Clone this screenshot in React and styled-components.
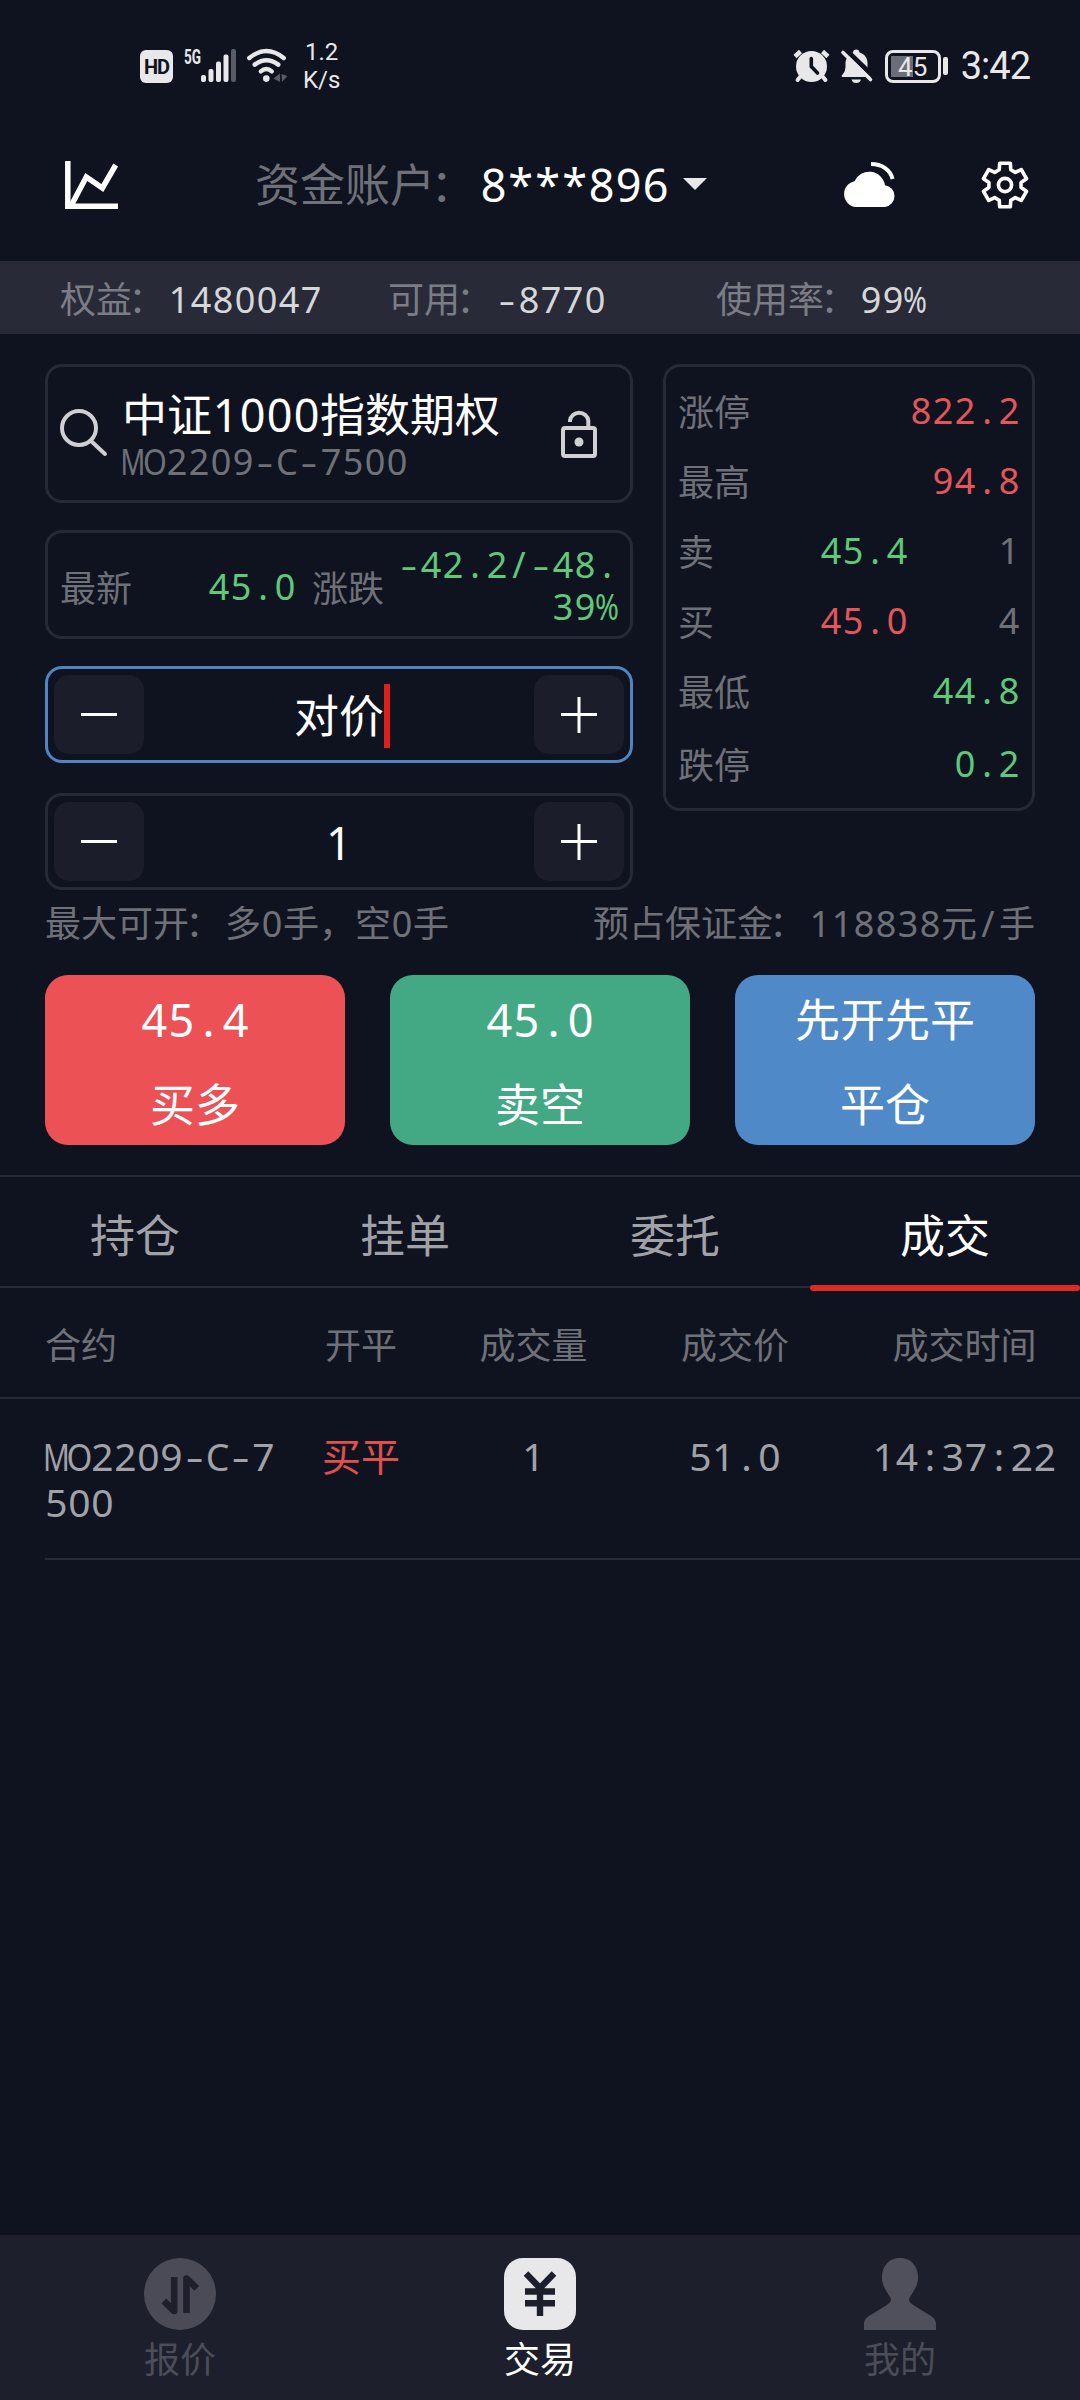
import React from 'react';
import styled, { createGlobalStyle } from 'styled-components'

const colors = {
    bg: '#0f1320',
    line: '#262936',
    label: '#6f7179',
    text: '#a0a2a8',
    red: '#e4565a',
    green: '#5fc87b',
}

// horizontal scale of the latin glyphs that don't fit the fixed pitch as they are
const SQUEEZE = { M: 0.76, O: 0.85, C: 0.96, '%': 0.8, '-': 1.45 }

// Latin characters sit in cells of one width, chinese characters flow as usual
const Txt = ({ children, size = 36, color }) => {
    const pitch = Math.round(size * 0.6)
    const parts = String(children).match(/\d+|[\x21-\x7e]|：|[^\x21-\x7e：]+/g)
    return (
        <Label $size={size} $color={color}>
            {parts.map((part, i) => {
                if (/^\d/.test(part)) return <Digits key={i} $gap={pitch - size * 0.572}>{part}</Digits>
                if (/^[\x21-\x7e]/.test(part)) return <Cell key={i} $pitch={pitch} $squeeze={SQUEEZE[part] || 1}>{part}</Cell>
                if (part === '：') return <Colon key={i}>{part}</Colon>
                return part
            })}
        </Label>
    )
}

const quotes = [
    { name: '涨停', value: '822.2', color: colors.red },
    { name: '最高', value: '94.8', color: colors.red },
    { name: '卖', value: '45.4', color: colors.green, count: '1' },
    { name: '买', value: '45.0', color: colors.red, count: '4' },
    { name: '最低', value: '44.8', color: colors.green },
    { name: '跌停', value: '0.2', color: colors.green },
]

const actions = [
    { top: '45.4', name: '买多', bg: '#ec5155' },
    { top: '45.0', name: '卖空', bg: '#43a984' },
    { top: '先开先平', name: '平仓', bg: '#4f89c8' },
]

const tabs = ['持仓', '挂单', '委托', '成交']

const HdIcon = () => <HdBadge>HD</HdBadge>

const SignalIcon = () => (
    <svg width="52" height="34" viewBox="0 0 52 34" fill="#e8e8ea">
        <text x="0" y="14.5" fontFamily="Roboto" fontWeight="700" fontSize="20" textLength="17" lengthAdjust="spacingAndGlyphs">5G</text>
        <rect x="17" y="26" width="5" height="7" rx="2" />
        <rect x="24.5" y="20" width="5" height="13" rx="2" />
        <rect x="32" y="12.5" width="5" height="20.5" rx="2" />
        <rect x="39.5" y="5.5" width="5" height="27.5" rx="2" />
        <rect x="47" y="0" width="5" height="33" rx="2" fill="#595b65" />
    </svg>
)

const WifiIcon = () => (
    <svg width="42" height="34" viewBox="0 0 42 34" fill="none" stroke="#e8e8ea" strokeWidth="4.4" strokeLinecap="round">
        <path d="M2.3 9Q19.5-5 36.7 9" />
        <path d="M7.7 15.6Q19.5 7 31.3 15.6" />
        <path d="M13.8 22.3Q19.3 17.6 24.8 22.3" />
        <circle cx="19.3" cy="29.6" r="3.3" fill="#e8e8ea" stroke="none" />
        <path d="M26.5 29.5L33 24.5V33zM34.5 25L40.5 27L35 33z" fill="#595b65" stroke="none" />
    </svg>
)

const AlarmIcon = () => (
    <svg width="36" height="34" viewBox="0 0 36 34" fill="none" stroke="#e8e8ea" strokeWidth="4" strokeLinecap="round">
        <circle cx="17.5" cy="17.5" r="15.5" fill="#e8e8ea" stroke="none" />
        <path d="M1 7.5L6.500 2.500M28.500 2.500L34 7.5" strokeLinecap="butt" strokeWidth="4.5" />
        <path d="M6 28L3.6 31M29 28L31.4 31" />
        <path d="M17.3 9.5V17.5L23.5 24" stroke={colors.bg} strokeWidth="3.6" />
    </svg>
)

const MutedIcon = () => (
    <svg width="32" height="34" viewBox="0 0 32 34" fill="#e8e8ea">
        <path d="M4.5 13.5C5 9 8 5 12 3.5C12-.5 18.5-.5 18.5 3.5C24 5 26.5 9.5 26.5 14V23L30 28H1.5Q-.5 27 2 25Q4.5 22 4.5 18z" />
        <path d="M10.5 30.5H20Q19 34 15.3 34Q11.5 34 10.5 30.5z" />
        <path d="M4 0L32 27" stroke={colors.bg} strokeWidth="5" />
        <path d="M2 3.5L29.5 30.5" stroke="#e8e8ea" strokeWidth="3.6" strokeLinecap="round" />
    </svg>
)

const ChartIcon = () => (
    <svg width="54" height="48" viewBox="0 0 54 48" fill="none" stroke="#fff" strokeWidth="5.5">
        <path d="M2.8 0V45.2H53" />
        <path d="M6.5 44L21.3 16L37.4 27L50.7 4" />
    </svg>
)

const CloudIcon = () => (
    <svg width="54" height="46" viewBox="0 0 54 46" fill="#fff">
        <path d="M13 45A13 13 0 0 1 11.5 19.3A16 16 0 0 1 42 23.2A11 11 0 0 1 42 45z" />
        <path d="M28 2C39 2 47.5 8 49.5 17" fill="none" stroke="#fff" strokeWidth="4" />
    </svg>
)

// outline of the top tooth, the gear is the same tooth turned six times
const TOOTH = [[-5.8, -15.2], [-5.3, -21.8], [5.3, -21.8], [5.8, -15.2]]

const gearPoints = [0, 1, 2, 3, 4, 5].flatMap(k => {
    const a = (k * Math.PI) / 3
    return TOOTH.map(([x, y]) => [
        (x * Math.cos(a) - y * Math.sin(a)).toFixed(2),
        (x * Math.sin(a) + y * Math.cos(a)).toFixed(2),
    ].join())
}).join(' ')

const GearIcon = () => (
    <svg width="48" height="48" viewBox="-24 -24 48 48" fill="none" stroke="#fff" strokeWidth="3.6" strokeLinejoin="round">
        <polygon points={gearPoints} />
        <circle r="6.6" />
    </svg>
)

const SearchIcon = () => (
    <svg width="50" height="50" viewBox="0 0 50 50" fill="none" stroke="#cfcfd4" strokeWidth="4" strokeLinecap="round">
        <circle cx="20" cy="19" r="17" />
        <path d="M31.5 31.5L46 45" />
    </svg>
)

const LockIcon = () => (
    <svg width="36" height="48" viewBox="0 0 36 48" fill="none" stroke="#cfcfd4" strokeWidth="4">
        <rect x="2" y="18" width="32" height="28" rx="2" />
        <path d="M9 12V10.5A9.2 8.7 0 0 1 27.3 10.5V17" />
        <circle cx="18" cy="32" r="4.5" fill="#cfcfd4" stroke="none" />
    </svg>
)

const MinusIcon = () => (
    <svg width="36" height="36" viewBox="0 0 36 36" stroke="#fff" strokeWidth="3">
        <path d="M0 17.5H36" />
    </svg>
)

const PlusIcon = () => (
    <svg width="36" height="36" viewBox="0 0 36 36" stroke="#fff" strokeWidth="3">
        <path d="M0 17.5H36M18 0V36" />
    </svg>
)

const PriceIcon = () => (
    <svg width="72" height="72" viewBox="0 0 72 72" fill="none" stroke="#1d1f2d" strokeWidth="6.6" strokeLinejoin="round">
        <circle cx="36" cy="36" r="36" fill="#4a4b56" stroke="none" />
        <path d="M30.2 19V53L19.8 43" />
        <path d="M42.5 55V20.5L52.8 30.3" />
    </svg>
)

const TradeIcon = () => (
    <svg width="72" height="72" viewBox="0 0 72 72" fill="none" stroke="#1d1f2d" strokeWidth="6.4">
        <rect width="72" height="72" rx="19" fill="#e8e8ea" stroke="none" />
        <path d="M22 15.5L36 30L50 15.5M36 28V58M21 33.5H51M21 45.2H51" />
    </svg>
)

const MineIcon = () => (
    <svg width="72" height="72" viewBox="0 0 72 72" fill="#4f505b">
        <path d="M0 72V67C0 62 2 60 5 58L22 47.5C27 44.5 28 42 25.5 38C21 31 18 27 18 19C18 8 25 0 36 0C47 0 54 8 54 19C54 27 51 31 46.5 38C44 42 45 44.5 50 47.5L67 58C70 60 72 62 72 67V72z" />
    </svg>
)

const Stepper = ({ value, focused }) => (
    <StepperBox $focused={focused}>
        <StepButton type="button"><MinusIcon /></StepButton>
        <StepValue>
            <Txt size={45} color="#fff">{value}</Txt>
            {focused && <Caret />}
        </StepValue>
        <StepButton type="button"><PlusIcon /></StepButton>
    </StepperBox>
)

const App = () => (
    <>
        <GlobalStyle />
        <Screen>
            <StatusBar>
                <StatusGroup>
                    <HdIcon />
                    <SignalIcon />
                    <WifiIcon />
                    <Speed>1.2<br />K/s</Speed>
                </StatusGroup>
                <StatusGroup>
                    <AlarmIcon />
                    <MutedIcon />
                    <Battery><BatteryBody>45</BatteryBody><BatteryTip /></Battery>
                    <Clock>3:42</Clock>
                </StatusGroup>
            </StatusBar>

            <Header>
                <ChartIcon />
                <Account>
                    <Txt size={45} color={colors.label}>资金账户：</Txt>
                    <Txt size={45} color="#fff">8***896</Txt>
                    <Arrow />
                </Account>
                <HeaderIcons>
                    <CloudIcon />
                    <GearIcon />
                </HeaderIcons>
            </Header>

            <Funds>
                <Fund><Txt color="#7b7d86">权益：</Txt><Txt color="#d6d7da">1480047</Txt></Fund>
                <Fund><Txt color="#7b7d86">可用：</Txt><Txt color="#d6d7da">-8770</Txt></Fund>
                <Fund><Txt color="#7b7d86">使用率：</Txt><Txt color="#d6d7da">99%</Txt></Fund>
            </Funds>

            <Trade>
                <OrderForm>
                    <Contract>
                        <SearchIcon />
                        <ContractName>
                            <Txt size={45} color="#fff">中证1000指数期权</Txt>
                            <Txt color={colors.label}>MO2209-C-7500</Txt>
                        </ContractName>
                        <LockIcon />
                    </Contract>
                    <LastPrice>
                        <Txt color={colors.label}>最新</Txt>
                        <Txt color={colors.green}>45.0</Txt>
                        <Txt color={colors.label}>涨跌</Txt>
                        <Change>
                            <Txt color={colors.green}>-42.2/-48.</Txt>
                            <Txt color={colors.green}>39%</Txt>
                        </Change>
                    </LastPrice>
                    <Stepper value="对价" focused />
                    <Stepper value="1" />
                </OrderForm>
                <Quotes>
                    {quotes.map(({ name, value, color, count }) => (
                        <QuoteRow key={name}>
                            <Txt color={colors.label}>{name}</Txt>
                            <QuoteValue><Txt color={color}>{value}</Txt></QuoteValue>
                            {count && <QuoteCount><Txt color={colors.label}>{count}</Txt></QuoteCount>}
                        </QuoteRow>
                    ))}
                </Quotes>
            </Trade>

            <Limits>
                <Txt color={colors.label}>最大可开：多0手，空0手</Txt>
                <Txt color={colors.label}>预占保证金：118838元/手</Txt>
            </Limits>

            <Actions>
                {actions.map(({ top, name, bg }) => (
                    <ActionButton key={name} type="button" $bg={bg}>
                        <Txt size={45} color="#fff">{top}</Txt>
                        <Txt size={45} color="#fff">{name}</Txt>
                    </ActionButton>
                ))}
            </Actions>

            <Tabs>
                {tabs.map(tab => (
                    <Tab key={tab} $active={tab === '成交'}>
                        <Txt size={45}>{tab}</Txt>
                    </Tab>
                ))}
            </Tabs>

            <TableHead>
                <Txt>合约</Txt>
                <Col><Txt>开平</Txt></Col>
                <Col><Txt>成交量</Txt></Col>
                <Col><Txt>成交价</Txt></Col>
                <Col><Txt>成交时间</Txt></Col>
            </TableHead>
            <TableRow>
                <ContractCell>
                    <Txt size={39}>MO2209-C-7</Txt>
                    <Txt size={39}>500</Txt>
                </ContractCell>
                <Col><Txt size={39} color="#e0504d">买平</Txt></Col>
                <Col><Txt size={39}>1</Txt></Col>
                <Col><Txt size={39}>51.0</Txt></Col>
                <Col><Txt size={39}>14:37:22</Txt></Col>
            </TableRow>

            <NavBar>
                <NavItem><PriceIcon /><Txt>报价</Txt></NavItem>
                <NavItem $active><TradeIcon /><Txt>交易</Txt></NavItem>
                <NavItem><MineIcon /><Txt>我的</Txt></NavItem>
            </NavBar>
        </Screen>
    </>
)

const GlobalStyle = createGlobalStyle`
    * {
        box-sizing: border-box;
    }
    body {
        margin: 0;
        background: ${colors.bg};
        font-family: 'Noto Sans', 'Noto Sans CJK SC', sans-serif;
    }
    button {
        border: none;
        padding: 0;
        font-family: inherit;
    }
    svg {
        display: block;
        flex-shrink: 0;
        overflow: visible;
    }
`

const Label = styled.span`
    font-size: ${p => p.$size}px;
    color: ${p => p.$color || 'inherit'};
    white-space: nowrap;
`
const Digits = styled.span`
    margin: 0 ${p => -p.$gap / 2}px 0 ${p => p.$gap / 2}px;
    letter-spacing: ${p => p.$gap}px;
`
const Cell = styled.span`
    display: inline-flex;
    justify-content: center;
    width: ${p => p.$pitch}px;
    transform: scaleX(${p => p.$squeeze});
`
const Colon = styled.span`
    margin: 0 0.1em 0 -0.1em;
`

const Screen = styled.div`
    display: flex;
    flex-direction: column;
    width: 1080px;
    height: 2400px;
    background: ${colors.bg};
    overflow: hidden;
`
const StatusBar = styled.div`
    display: flex;
    justify-content: space-between;
    align-items: center;
    height: 132px;
    padding: 0 50px 0 140px;
    color: #e8e8ea;
    font-family: Roboto, sans-serif;
`
const StatusGroup = styled.div`
    display: flex;
    align-items: center;
    gap: 11px;
`
const HdBadge = styled.div`
    width: 33px;
    height: 33px;
    border-radius: 6px;
    background: #e8e8ea;
    color: ${colors.bg};
    font-size: 20px;
    font-weight: 700;
    line-height: 34px;
    letter-spacing: -1px;
    text-align: center;
`
const Speed = styled.div`
    margin-left: 3px;
    font-size: 24px;
    line-height: 28px;
    text-align: center;
`
const Battery = styled.div`
    display: flex;
    align-items: center;
    gap: 2px;
    margin: 0 2px 0 1px;
`
const BatteryBody = styled.div`
    width: 56px;
    height: 33px;
    border: 3px solid #e8e8ea;
    border-radius: 8px;
    background: linear-gradient(#6c6e77, #6c6e77) 3px 3px / 22px 21px no-repeat;
    font-size: 26px;
    font-weight: 400;
    line-height: 29px;
    text-align: center;
`
const BatteryTip = styled.div`
    width: 5px;
    height: 18px;
    border-radius: 2px;
    background: #e8e8ea;
`
const Clock = styled.div`
    font-size: 38px;
    line-height: 44px;
    letter-spacing: -1px;
`

const Header = styled.header`
    display: flex;
    align-items: center;
    height: 129px;
    padding: 0 51px 24px 65px;
`
const Account = styled.div`
    display: flex;
    align-items: center;
    margin-left: 136px;
    line-height: 60px;
`
const Arrow = styled.div`
    margin: -2px 0 0 14px;
    border: 12px solid transparent;
    border-top-color: #e8e8ea;
    border-bottom: none;
`
const HeaderIcons = styled.div`
    display: flex;
    align-items: center;
    gap: 84px;
    margin-left: auto;
`

const Funds = styled.div`
    display: flex;
    align-items: center;
    height: 73px;
    padding-left: 60px;
    background: #282b37;
`
const Fund = styled.div`
    width: 328px;
    white-space: nowrap;
`

const Trade = styled.main`
    display: flex;
    justify-content: space-between;
    align-items: flex-start;
    padding: 30px 45px 0;
`
const OrderForm = styled.div`
    width: 588px;
`
const Box = styled.div`
    display: flex;
    align-items: center;
    border: 3px solid ${colors.line};
    border-radius: 17px;
`
const Contract = styled(Box)`
    height: 139px;
    padding: 0 33px 0 11px;
    margin-bottom: 27px;
`
const ContractName = styled.div`
    display: flex;
    flex-direction: column;
    flex-grow: 1;
    margin: 8px 0 0 13px;
    line-height: 47px;
`
const LastPrice = styled(Box)`
    height: 109px;
    padding: 3px 12px 0;
    margin-bottom: 27px;

    > :nth-child(2) {
        margin-left: auto;
    }
    > :nth-child(3) {
        margin-left: 16px;
    }
`
const Change = styled.div`
    display: flex;
    flex-direction: column;
    align-items: flex-end;
    width: 234px;
    line-height: 42px;
`
const StepperBox = styled(Box)`
    justify-content: space-between;
    height: 97px;
    padding: 0 6px;
    border-color: ${p => (p.$focused ? '#5085c2' : colors.line)};

    & + & {
        margin-top: 30px;
    }
`
const StepButton = styled.button`
    display: flex;
    align-items: center;
    justify-content: center;
    width: 90px;
    height: 79px;
    border-radius: 15px;
    background: #1b1e2a;
`
const StepValue = styled.div`
    position: relative;
    display: flex;
    align-items: center;
    margin-top: 3px;
    line-height: 60px;
`
const Caret = styled.span`
    position: absolute;
    right: -6px;
    width: 6px;
    height: 64px;
    background: #dc201c;
`

const Quotes = styled(Box)`
    flex-direction: column;
    align-items: stretch;
    width: 372px;
    height: 447px;
    padding: 8px 12px 0;
`
const QuoteRow = styled.div`
    display: flex;
    align-items: center;
    height: 70px;

    &:last-child {
        margin-top: 3px;
    }
`
const QuoteValue = styled.div`
    display: flex;
    margin-left: auto;
`
const QuoteCount = styled.div`
    width: 112px;
    text-align: right;
`

const Limits = styled.div`
    display: flex;
    align-items: center;
    justify-content: space-between;
    height: 62px;
    margin-bottom: 23px;
    padding: 0 45px;
`
const Actions = styled.div`
    display: flex;
    justify-content: space-between;
    padding: 0 45px 30px;
`
const ActionButton = styled.button`
    display: flex;
    flex-direction: column;
    align-items: center;
    width: 300px;
    height: 170px;
    padding-top: 2px;
    border-radius: 23px;
    background: ${p => p.$bg};
    line-height: 85px;
`

const Tabs = styled.nav`
    display: flex;
    height: 113px;
    border-top: 2px solid ${colors.line};
    border-bottom: 2px solid ${colors.line};
`
const Tab = styled.div`
    position: relative;
    display: flex;
    align-items: center;
    justify-content: center;
    width: 270px;
    padding-top: 4px;
    color: ${p => (p.$active ? '#fff' : colors.text)};

    &::after {
        content: '';
        display: ${p => (p.$active ? 'block' : 'none')};
        position: absolute;
        left: 0;
        right: 0;
        bottom: -5px;
        height: 6px;
        border-radius: 3px;
        background: #dc2a25;
    }
`

const TableHead = styled.div`
    display: grid;
    grid-template-columns: 230px 172px 173px 230px 229px;
    align-items: center;
    height: 111px;
    padding: 2px 0 0 45px;
    border-bottom: 2px solid ${colors.line};
    color: ${colors.label};
`
const TableRow = styled.div`
    display: grid;
    grid-template-columns: 230px 172px 173px 230px 229px;
    height: 161px;
    margin-left: 45px;
    padding-top: 34px;
    border-bottom: 2px solid ${colors.line};
    color: ${colors.text};
    line-height: 46px;
`
const ContractCell = styled.div`
    display: flex;
    flex-direction: column;
`
const Col = styled.div`
    text-align: center;
    white-space: nowrap;
`

const NavBar = styled.footer`
    display: flex;
    height: 165px;
    margin-top: auto;
    background: #1d1f2d;
`
const NavItem = styled.div`
    display: flex;
    flex-direction: column;
    align-items: center;
    width: 360px;
    padding-top: 23px;
    line-height: 60px;
    color: ${p => (p.$active ? '#fff' : '#4b4d58')};
`

export default App;
